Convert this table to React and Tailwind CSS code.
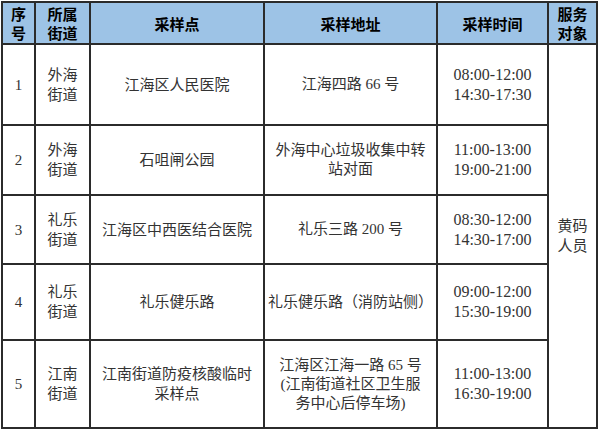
import React from "react";

const body = { fontFamily: '"Liberation Serif", "Noto Sans CJK SC", serif' };
const head = { fontFamily: '"Noto Sans CJK SC", "Noto Sans", sans-serif' };

const rows = [
  { n: "1", s: ["外海", "街道"], p: ["江海区人民医院"], a: ["江海四路 66 号"], t: ["08:00-12:00", "14:30-17:30"], h: "h-[81px]" },
  { n: "2", s: ["外海", "街道"], p: ["石咀闸公园"], a: ["外海中心垃圾收集中转", "站对面"], t: ["11:00-13:00", "19:00-21:00"], h: "h-[70px]" },
  { n: "3", s: ["礼乐", "街道"], p: ["江海区中西医结合医院"], a: ["礼乐三路 200 号"], t: ["08:30-12:00", "14:30-17:00"], h: "h-[69px]" },
  { n: "4", s: ["礼乐", "街道"], p: ["礼乐健乐路"], a: ["礼乐健乐路（消防站侧）"], t: ["09:00-12:00", "15:30-19:00"], h: "h-[76px]" },
  { n: "5", s: ["江南", "街道"], p: ["江南街道防疫核酸临时", "采样点"], a: ["江海区江海一路 65 号", "(江南街道社区卫生服", "务中心后停车场)"], t: ["11:00-13:00", "16:30-19:00"], h: "h-[88px]" },
];

const cell = "border-2 border-[#2b2b2b] text-center align-middle p-0";

function Lines({ items, cls = "" }) {
  return (
    <div className={cls}>
      {items.map((x, i) => (
        <div key={i} className="whitespace-nowrap">{x}</div>
      ))}
    </div>
  );
}

export default function App() {
  return (
    <div className="w-[600px] h-[433px] bg-white pt-[1px] pl-[1px] overflow-hidden">
      <table className="border-collapse table-fixed w-[597px]" style={body}>
        <colgroup>
          <col className="w-[33px]" />
          <col className="w-[55px]" />
          <col className="w-[174px]" />
          <col className="w-[173px]" />
          <col className="w-[111px]" />
          <col className="w-[49px]" />
        </colgroup>
        <thead>
          <tr className="h-[42px] bg-[#9dc3e6] text-black font-bold text-[15px] leading-[19px]" style={head}>
            <th className={cell}><Lines items={["序", "号"]} /></th>
            <th className={cell}><Lines items={["所属", "街道"]} /></th>
            <th className={cell}>采样点</th>
            <th className={cell}>采样地址</th>
            <th className={cell}>采样时间</th>
            <th className={cell}><Lines items={["服务", "对象"]} /></th>
          </tr>
        </thead>
        <tbody className="text-[15px] leading-[20px] text-[#333]">
          {rows.map((r, i) => (
            <tr key={i} className={r.h}>
              <td className={cell}>{r.n}</td>
              <td className={cell}><Lines items={r.s} /></td>
              <td className={cell}><Lines items={r.p} /></td>
              <td className={cell}><Lines items={r.a} cls="leading-[19px]" /></td>
              <td className={cell}><Lines items={r.t} cls="text-[16px] leading-[20px]" /></td>
              {i === 0 && (
                <td className={cell} rowSpan={5}>
                  <Lines items={["黄码", "人员"]} />
                </td>
              )}
            </tr>
          ))}
        </tbody>
      </table>
    </div>
  );
}
